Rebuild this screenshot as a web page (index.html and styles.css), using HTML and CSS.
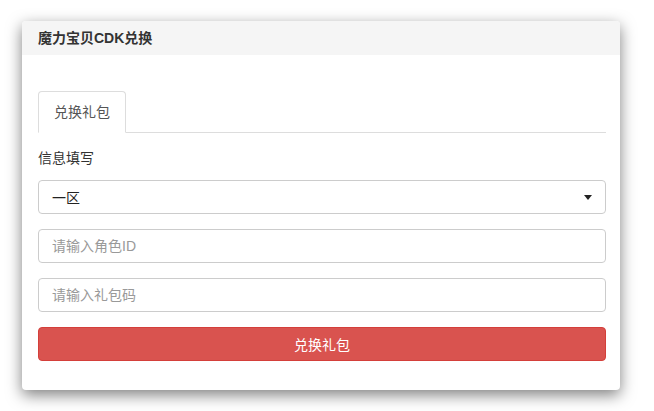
FILE: index.html
```
<!DOCTYPE html>
<html lang="zh">
<head>
<meta charset="utf-8">
<title>魔力宝贝CDK兑换</title>
<link rel="stylesheet" href="styles.css">
</head>
<body>
<div class="panel">
  <div class="panel-heading">魔力宝贝CDK兑换</div>
  <div class="panel-body">
    <ul class="tabs">
      <li class="tab active">兑换礼包</li>
    </ul>
    <div class="label">信息填写</div>
    <div class="select">
      <span>一区</span>
      <span class="caret"></span>
    </div>
    <input class="field" type="text" placeholder="请输入角色ID">
    <input class="field" type="text" placeholder="请输入礼包码">
    <button class="btn-danger" type="button">兑换礼包</button>
  </div>
</div>
</body>
</html>
```
FILE: styles.css
```
* { box-sizing: border-box; }
html, body { margin: 0; background: #fff; height: 100%; }
body {
  min-height: 411px;
  padding: 21px 0 0 22px;
  font-family: "Liberation Sans", "Noto Sans CJK SC", sans-serif;
  font-size: 14px;
  color: #333;
}
.panel {
  width: 598px;
  background: #fff;
  border-radius: 4px;
  box-shadow: 0 5px 15px rgba(0,0,0,0.5);
  overflow: hidden;
}
.panel-heading {
  height: 34px;
  line-height: 34px;
  padding: 0 16px;
  background: #f5f5f5;
  font-size: 14px;
  font-weight: bold;
  color: #333;
}
.panel-body {
  padding: 36px 14px 29px 16px;
  display: flex;
  flex-direction: column;
}
.tabs {
  list-style: none;
  margin: 0;
  padding: 0;
  display: flex;
  border-bottom: 1px solid #ddd;
}
.tab {
  padding: 10px 15px;
  line-height: 20px;
  border: 1px solid #ddd;
  border-bottom-color: transparent;
  border-radius: 4px 4px 0 0;
  margin-bottom: -1px;
  background: #fff;
  color: #555;
}
.label {
  margin-top: 15px;
  line-height: 20px;
  color: #333;
}
.select, .field, .btn-danger {
  height: 34px;
  border-radius: 4px;
  font-family: inherit;
  font-size: 14px;
}
.select {
  margin-top: 12px;
  border: 1px solid #ccc;
  padding: 0 13px 0 13px;
  display: flex;
  align-items: center;
  justify-content: space-between;
  color: #222;
}
.caret {
  width: 0;
  height: 0;
  border-top: 5px solid #222;
  border-left: 4px solid transparent;
  border-right: 4px solid transparent;
}
.field {
  margin-top: 15px;
  border: 1px solid #ccc;
  padding: 0 13px;
  color: #555;
  outline: none;
}
.field::placeholder { color: #999; }
.btn-danger {
  margin-top: 15px;
  border: 1px solid #d43f3a;
  background: #d9534f;
  color: #fff;
  cursor: pointer;
}
```
